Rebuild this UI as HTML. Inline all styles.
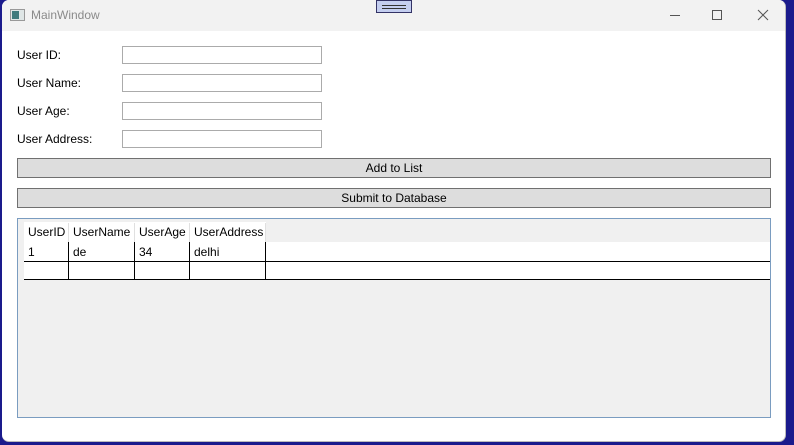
<!DOCTYPE html>
<html><head><style>
*{margin:0;padding:0;box-sizing:border-box}
body{width:794px;height:445px;background:#1a1a8c;position:relative;overflow:hidden;font-family:"Segoe UI","Liberation Sans",sans-serif;font-size:12px;color:#000}
.win{position:absolute;left:2px;top:0;width:784px;height:442px;background:#fff;border-radius:7px;overflow:hidden;border-right:1px solid #bbb;border-bottom:1px solid #bbb}
.title{position:absolute;left:0;top:0;width:100%;height:31px;background:#f2f2f2}
.title span{position:absolute;left:29px;top:8px;color:#8a8a8a;font-size:12px}
.a{position:absolute}
.lbl{position:absolute;left:15px;font-size:12px}
.tb{position:absolute;left:120px;width:200px;height:18px;border:1px solid #ababab;background:#fff}
.btn{position:absolute;left:15px;width:754px;height:20px;background:#dddddd;border:1px solid #707070;text-align:center;line-height:18px}
.grid{position:absolute;left:15px;top:218px;width:754px;height:200px;background:#f0f0f0;border:1px solid #7a9cc0}
.c{position:absolute;height:19px;line-height:18px;padding-left:4px}
</style></head><body>
<div class="win">
<div class="title">
<div class="a" style="left:8px;top:9px;width:15px;height:12px;border:1px solid #999;background:#dfe6e6"><div class="a" style="left:1px;top:1px;width:7px;height:8px;background:#3e7a7c"></div></div>
<span>MainWindow</span>
<div class="a" style="left:668px;top:15px;width:10px;height:1px;background:#555"></div>
<div class="a" style="left:710px;top:10px;width:10px;height:10px;border:1px solid #555"></div>
<svg class="a" style="left:755px;top:9px" width="12" height="12"><path d="M1 1L11 11M11 1L1 11" stroke="#555" stroke-width="1"/></svg>
</div>
<div class="lbl" style="top:48px">User ID:</div>
<div class="lbl" style="top:76px">User Name:</div>
<div class="lbl" style="top:104px">User Age:</div>
<div class="lbl" style="top:132px">User Address:</div>
<div class="tb" style="top:46px"></div>
<div class="tb" style="top:74px"></div>
<div class="tb" style="top:102px"></div>
<div class="tb" style="top:130px"></div>
<div class="btn" style="top:158px">Add to List</div>
<div class="btn" style="top:188px">Submit to Database</div>
<div class="grid">
<div class="a" style="left:6px;top:3px;width:242px;height:21px;background:#fff"></div>
<div class="c" style="left:6px;top:4px;border-right:1px solid #e0e0e0;width:45px">UserID</div>
<div class="c" style="left:51px;top:4px;border-right:1px solid #e0e0e0;width:66px">UserName</div>
<div class="c" style="left:117px;top:4px;border-right:1px solid #e0e0e0;width:55px">UserAge</div>
<div class="c" style="left:172px;top:4px;border-right:1px solid #e0e0e0;width:76px">UserAddress</div>
<div class="a" style="left:6px;top:23px;width:746px;height:38px;background:#fff;border-bottom:1px solid #000"></div>
<div class="a" style="left:6px;top:42px;width:746px;height:1px;background:#000"></div>
<div class="a" style="left:50px;top:23px;width:1px;height:38px;background:#000"></div>
<div class="a" style="left:116px;top:23px;width:1px;height:38px;background:#000"></div>
<div class="a" style="left:171px;top:23px;width:1px;height:38px;background:#000"></div>
<div class="a" style="left:247px;top:23px;width:1px;height:38px;background:#000"></div>
<div class="c" style="left:6px;top:24px">1</div>
<div class="c" style="left:51px;top:24px">de</div>
<div class="c" style="left:117px;top:24px">34</div>
<div class="c" style="left:172px;top:24px">delhi</div>
</div>
</div>
<div class="a" style="left:376px;top:0;width:36px;height:13px;background:#c4cef0;border:1px solid #333366"><div class="a" style="left:5px;top:4px;width:24px;height:1px;background:#333"></div><div class="a" style="left:5px;top:7px;width:24px;height:1px;background:#333"></div></div>
</body></html>
